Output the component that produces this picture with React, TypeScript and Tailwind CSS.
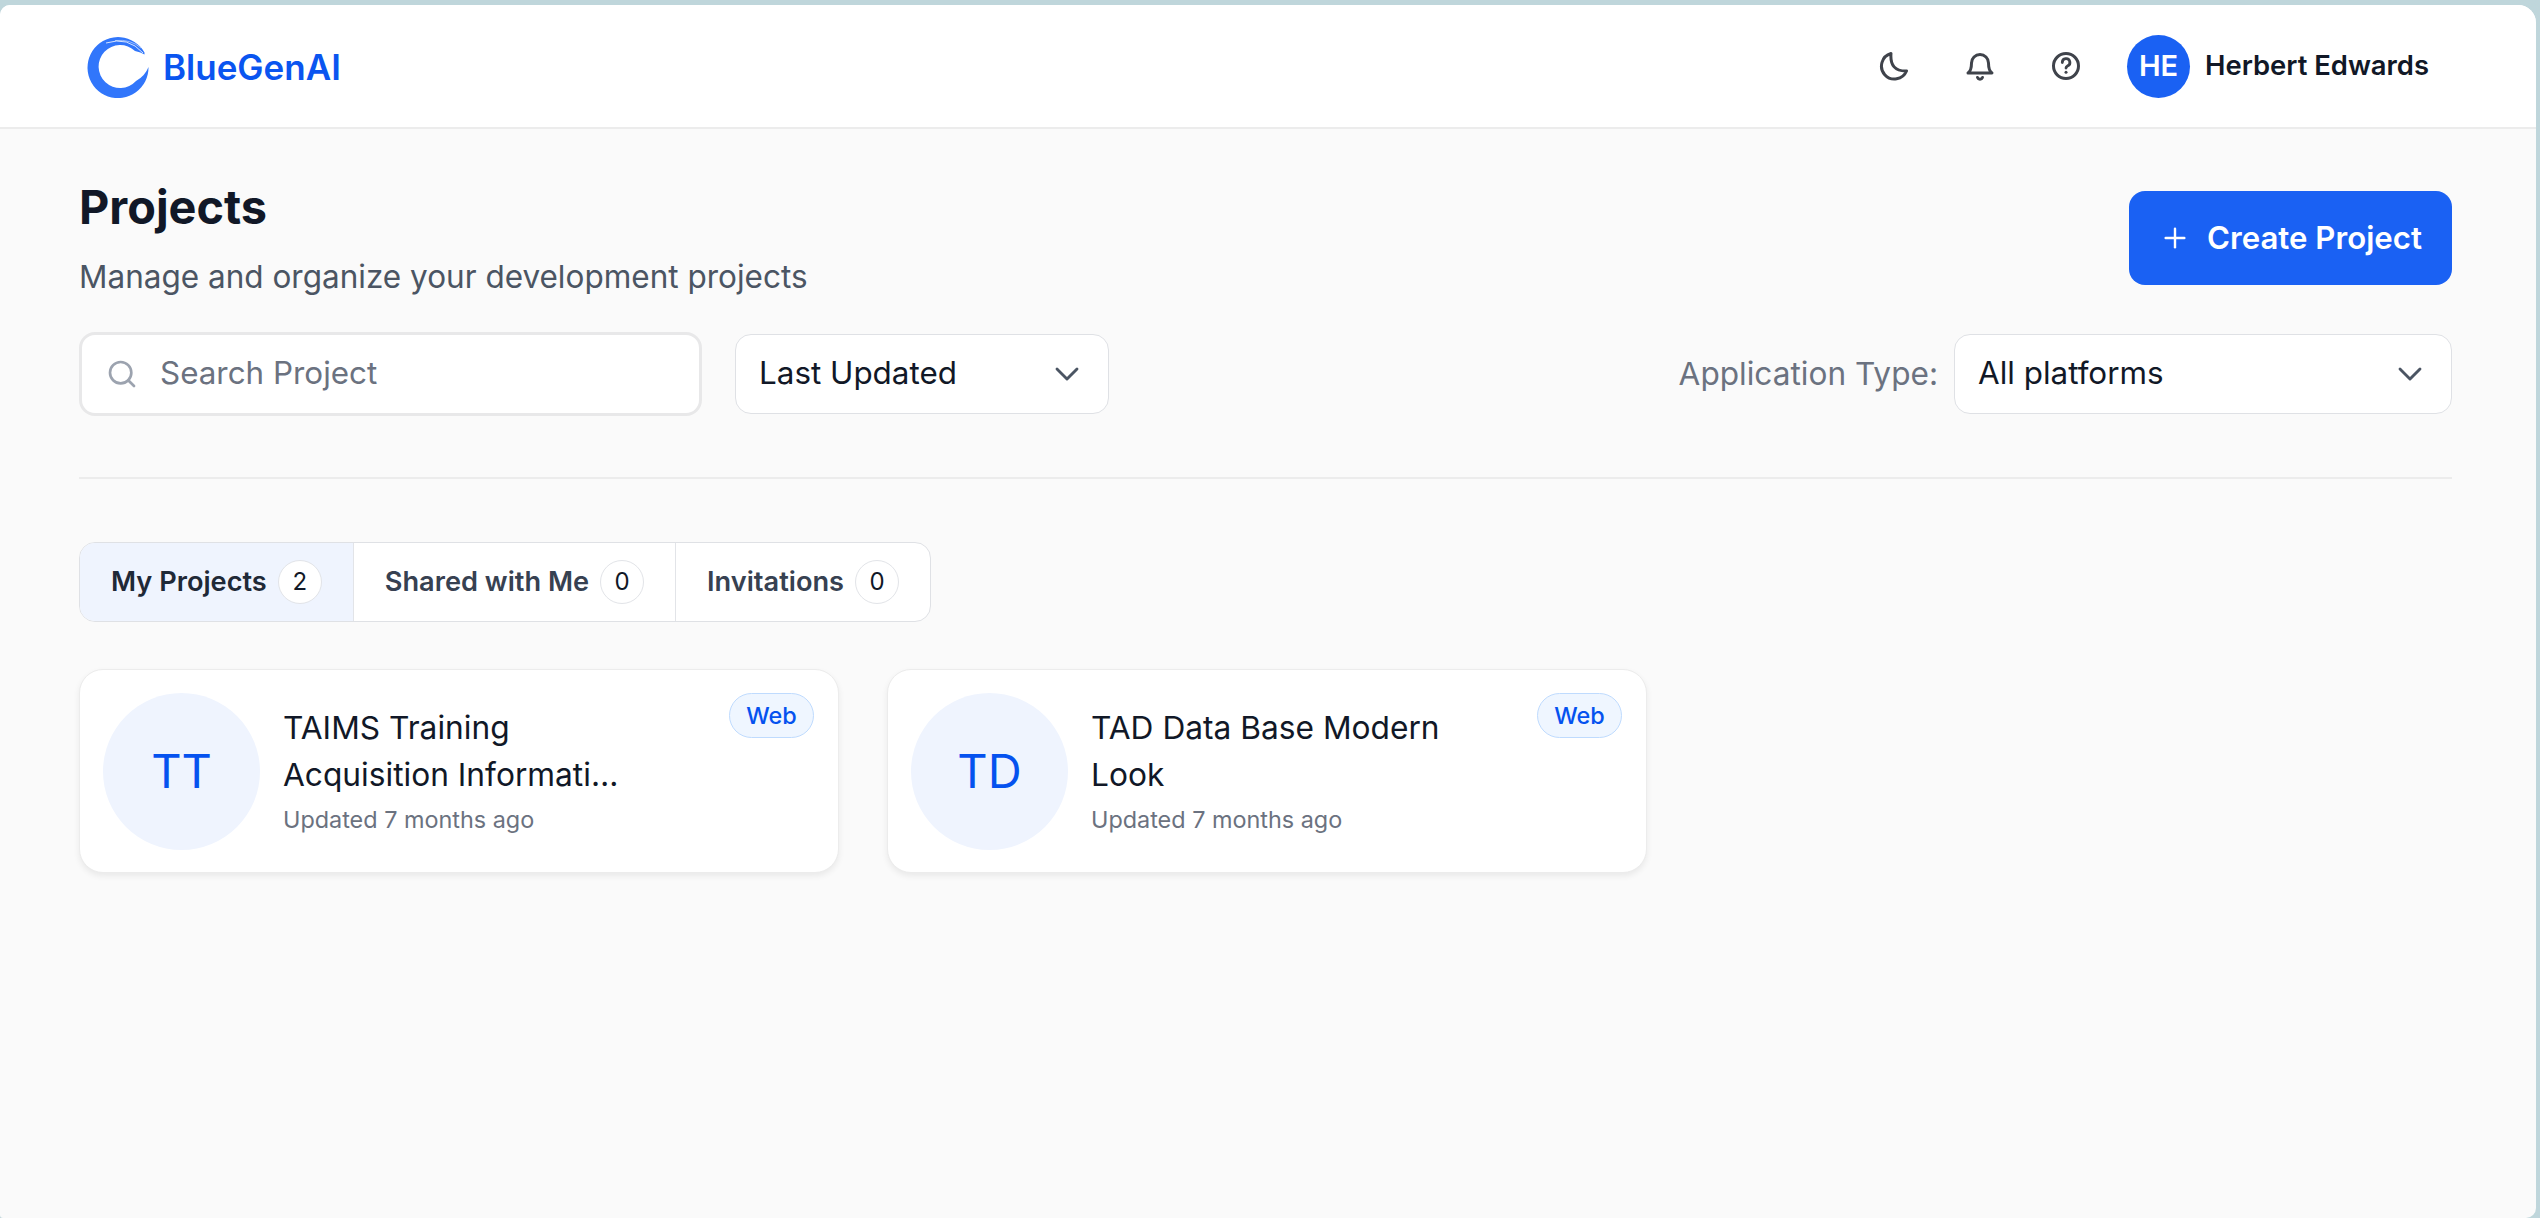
import { ChevronDown, Plus, Search } from 'lucide-react';

const tabs = [
  { label: 'My Projects', count: 2, active: true },
  { label: 'Shared with Me', count: 0, active: false },
  { label: 'Invitations', count: 0, active: false },
];

const projects = [
  { initials: 'TT', title: 'TAIMS Training Acquisition Information System', updated: 'Updated 7 months ago' },
  { initials: 'TD', title: 'TAD Data Base Modern Look', updated: 'Updated 7 months ago' },
];

function Logo() {
  return (
    <svg viewBox="0 0 90 90" className="w-[90px] h-[90px] shrink-0">
      <path
        d="M73.5 31.5 A30.5 30.5 0 1 0 77.5 46 Q74 55 65 60 A21.5 21.5 0 1 1 64 30 Q70 31 73.5 33.5 Z"
        fill="#3176fb"
      />
      <path d="M35 22 Q57 15 72 32" fill="none" stroke="#fff" strokeWidth="0.8" />
      <path d="M44 19.5 Q60 18 70 27" fill="none" stroke="#fff" strokeWidth="0.5" />
    </svg>
  );
}

function MoonIcon() {
  return (
    <svg viewBox="0 0 30 30" className="w-[30px] h-[30px]" fill="none" stroke="currentColor" strokeWidth="3" strokeLinejoin="round">
      <path d="M12 2.5 A13 13 0 1 0 27.5 20 Q10.5 20.5 12 2.5 Z" />
    </svg>
  );
}

function BellIcon() {
  return (
    <svg viewBox="0 0 30 30" className="w-[30px] h-[30px]" fill="none" stroke="currentColor" strokeWidth="3" strokeLinecap="round" strokeLinejoin="round">
      <path d="M3 22 C6 20 6.5 17 6.5 12 A8.5 8.5 0 0 1 23.5 12 C23.5 17 24 20 27 22 Z" />
      <path d="M12.5 26.5 A2.7 2.7 0 0 0 17.5 26.5" />
    </svg>
  );
}

function HelpIcon() {
  return (
    <svg viewBox="0 0 30 30" className="w-[30px] h-[30px]" fill="none" stroke="currentColor" strokeWidth="3" strokeLinecap="round">
      <circle cx="15" cy="15" r="12.5" />
      <path d="M11.3 11.5 A3.8 3.8 0 1 1 16.5 15 Q15 15.8 15 17" strokeWidth="2.8" />
      <circle cx="15" cy="21.3" r="1.5" fill="currentColor" stroke="none" />
    </svg>
  );
}

function SelectBox({ label, className }: { label: string; className: string }) {
  return (
    <div className={`h-[80px] pl-[23px] pr-[21px] flex items-center justify-between bg-white border-[1.5px] border-[#dfe1e5] rounded-[16px] ${className}`}>
      <span className="text-[31.4px] text-[#111827]">{label}</span>
      <ChevronDown size={40} className="text-[#4b5563]" strokeWidth={1.7} />
    </div>
  );
}

export default function App() {
  return (
    <div className="h-screen bg-[#bfd6db] pt-[5px] pr-[4px] overflow-hidden font-['Inter',sans-serif]">
      <div className="h-full bg-[#fafafa] rounded-tl-[10px] rounded-tr-[18px] rounded-br-[10px] rounded-bl-[3px] overflow-hidden flex flex-col">
        <header className="h-[124px] shrink-0 bg-white border-b-2 border-[#ececec] flex items-center justify-between pl-[71px] pr-[107px]">
          <div className="flex items-center gap-[2px]">
            <Logo />
            <span className="text-[35px] font-semibold text-[#0a55f0] mt-[2px]">BlueGenAI</span>
          </div>
          <div className="flex items-center">
            <div className="flex items-center gap-[56px] text-[#3f434b]">
              <MoonIcon />
              <BellIcon />
              <HelpIcon />
            </div>
            <div className="ml-[46px] w-[63px] h-[63px] rounded-full bg-[#1a61f3] text-white flex items-center justify-center text-[29px] font-semibold">
              HE
            </div>
            <span className="ml-[15px] text-[27.4px] font-semibold text-[#111827]">Herbert Edwards</span>
          </div>
        </header>

        <main className="flex-1 pl-[79px] pr-[84px]">
          <div className="flex items-start justify-between pt-[47px]">
            <div>
              <h1 className="text-[46.8px] leading-[62px] font-bold text-[#111827]">Projects</h1>
              <p className="mt-[16px] text-[31.5px] leading-[46px] text-[#4b5563]">Manage and organize your development projects</p>
            </div>
            <button className="mt-[15px] h-[94px] w-[323px] bg-[#1a61f3] text-white rounded-[16px] flex items-center justify-center gap-4 text-[31.2px] font-semibold">
              <Plus size={32} strokeWidth={1.8} />
              Create Project
            </button>
          </div>

          <div className="mt-[32px] flex items-center">
            <div className="w-[623px] h-[84px] bg-white border-[3px] border-[#e8e8e9] rounded-[16px] flex items-center pl-[24px] gap-[22px]">
              <Search size={32} className="text-[#9ca3af]" strokeWidth={2} />
              <span className="text-[31.4px] text-[#6b7280]">Search Project</span>
            </div>
            <SelectBox label="Last Updated" className="ml-[33px] w-[374px]" />
            <span className="ml-auto text-[31.6px] text-[#6b7280]">Application Type:</span>
            <SelectBox label="All platforms" className="ml-4 w-[498px]" />
          </div>

          <div className="mt-[61px] border-t-2 border-[#ececec]" />

          <div className="mt-[63px] inline-flex h-[80px] bg-white border-[1.5px] border-[#dfe1e5] rounded-[16px] overflow-hidden">
            {tabs.map((t) => (
              <div
                key={t.label}
                className={`flex items-center gap-[11px] px-[31px] border-r-[1.5px] border-[#e2e4e8] last:border-r-0 text-[27.2px] font-semibold ${
                  t.active ? 'bg-[#eff4fe] text-[#1f2937]' : 'text-[#374151]'
                }`}
              >
                {t.label}
                <span className="w-[44px] h-[44px] rounded-full bg-white border-[1.5px] border-[#e2e4e8] flex items-center justify-center text-[24px] font-normal text-[#111827]">
                  {t.count}
                </span>
              </div>
            ))}
          </div>

          <div className="mt-[47px] flex gap-[48px]">
            {projects.map((p) => (
              <div
                key={p.initials}
                className="relative w-[760px] h-[204px] bg-white border-[1.5px] border-[#ececec] rounded-[24px] shadow-[0_3px_6px_rgba(0,0,0,0.07)] flex items-center pl-[23px]"
              >
                <div className="w-[157px] h-[157px] rounded-full bg-[#eff4fe] shrink-0 flex items-center justify-center text-[47px] text-[#0552ef]">
                  {p.initials}
                </div>
                <div className="ml-[23px] w-[352px]">
                  <div className="text-[31.7px] leading-[47px] text-[#111827] line-clamp-2">{p.title}</div>
                  <div className="mt-[4px] text-[23.4px] leading-[36px] text-[#6b7280]">{p.updated}</div>
                </div>
                <span className="absolute top-[23px] right-[24px] w-[85px] h-[45px] rounded-full bg-[#eff6ff] border-[1.5px] border-[#bfdbfe] flex items-center justify-center text-[23.4px] font-medium text-[#0552ef]">
                  Web
                </span>
              </div>
            ))}
          </div>
        </main>
      </div>
    </div>
  );
}
